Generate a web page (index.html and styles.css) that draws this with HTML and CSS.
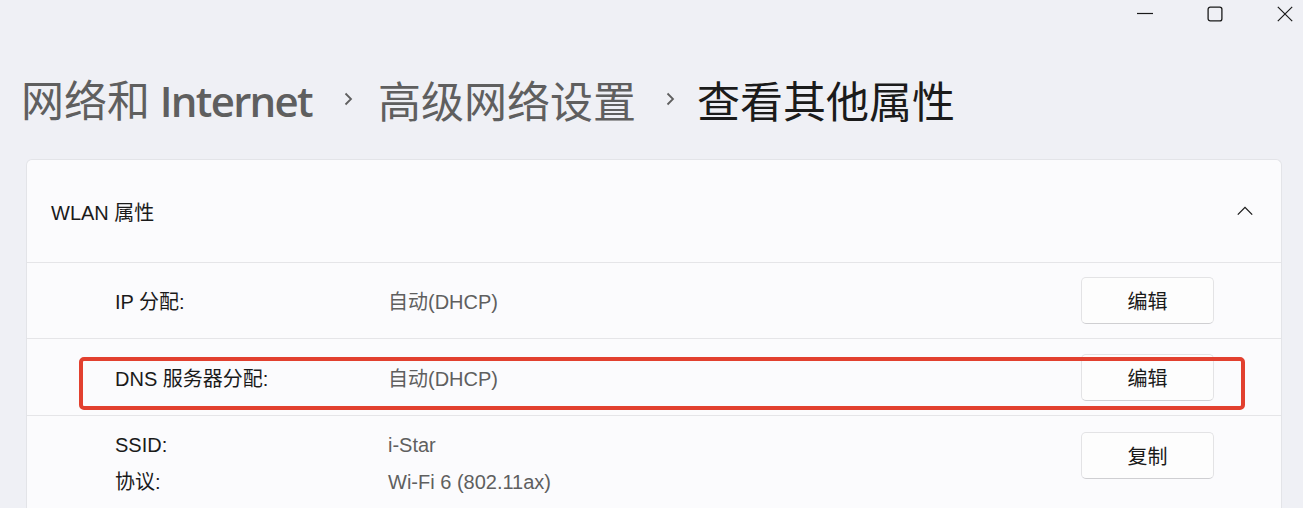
FILE: index.html
```html
<!DOCTYPE html>
<html lang="zh-CN">
<head>
<meta charset="utf-8">
<title>查看其他属性</title>
<link rel="stylesheet" href="styles.css">
</head>
<body>
<div class="titlebar">
  <svg class="cap-icon" width="16" height="16" viewBox="0 0 16 16"><path d="M0 7.5H16" stroke="#1a1a1a" stroke-width="1.2" fill="none"/></svg>
  <svg class="cap-icon" width="16" height="16" viewBox="0 0 16 16"><rect x="1.1" y="1.1" width="13.8" height="13.8" rx="2.2" stroke="#1a1a1a" stroke-width="1.3" fill="none"/></svg>
  <svg class="cap-icon" width="16" height="16" viewBox="0 0 16 16"><path d="M0.8 0.8L15.2 15.2M15.2 0.8L0.8 15.2" stroke="#1a1a1a" stroke-width="1.2" fill="none"/></svg>
</div>

<h1 class="breadcrumb">
  <span class="crumb">网络和 <span class="latin">Internet</span></span>
  <svg class="crumb-sep" width="9" height="14" viewBox="0 0 9 14"><path d="M1.5 1.5L7 7L1.5 12.5" stroke="#5f5f5f" stroke-width="1.8" fill="none"/></svg>
  <span class="crumb">高级网络设置</span>
  <svg class="crumb-sep narrow" width="9" height="14" viewBox="0 0 9 14"><path d="M1.5 1.5L7 7L1.5 12.5" stroke="#5f5f5f" stroke-width="1.8" fill="none"/></svg>
  <span class="crumb current">查看其他属性</span>
</h1>

<section class="card">
  <div class="card-head">
    <span class="card-title">WLAN 属性</span>
    <svg class="chevron-up" width="16" height="10" viewBox="0 0 16 10"><path d="M0.8 8.6L8 1.4L15.2 8.6" stroke="#1a1a1a" stroke-width="1.3" fill="none"/></svg>
  </div>

  <div class="row">
    <span class="label">IP 分配:</span>
    <span class="value">自动(DHCP)</span>
    <button class="btn">编辑</button>
  </div>

  <div class="row row-dns">
    <span class="label">DNS 服务器分配:</span>
    <span class="value">自动(DHCP)</span>
    <button class="btn">编辑</button>
    <div class="highlight"></div>
  </div>

  <div class="row row-multi">
    <div class="label lines"><span>SSID:</span><span>协议:</span></div>
    <div class="value lines"><span>i-Star</span><span>Wi-Fi 6 (802.11ax)</span></div>
    <button class="btn">复制</button>
  </div>
</section>
</body>
</html>
```

FILE: styles.css
```css
html, body {
  margin: 0;
  padding: 0;
}
body {
  background: #eff0f5;
  font-family: "Liberation Sans", "Noto Sans CJK SC", sans-serif;
  color: #1a1a1a;
  overflow: hidden;
  height: 508px;
}

.titlebar {
  height: 28px;
  display: flex;
  justify-content: flex-end;
  align-items: center;
  gap: 54px;
  padding-right: 10px;
}
.cap-icon {
  display: block;
}

.breadcrumb {
  margin: 43px 0 0 0;
  padding-left: 21px;
  height: 56px;
  display: flex;
  align-items: center;
  font-family: "Noto Sans CJK SC", sans-serif;
  font-size: 43px;
  line-height: 56px;
  font-weight: 400;
  color: #5f5f5f;
}
.crumb {
  white-space: nowrap;
}
.latin {
  font-family: "Open Sans", "Noto Sans CJK SC", sans-serif;
  font-weight: 600;
  font-size: 42px;
  letter-spacing: -1.7px;
}
.crumb.current {
  color: #1b1b1b;
}
.crumb-sep {
  display: block;
  margin: 0 25px 0 32px;
}
.crumb-sep.narrow {
  margin: 0 22px 0 30px;
}

.card {
  position: relative;
  box-sizing: border-box;
  margin: 32px 0 0 26px;
  width: 1256px;
  height: 349px;
  background: #fbfbfd;
  border: 1px solid #e3e4e8;
  border-bottom: none;
  border-radius: 6px 6px 0 0;
}
.card-head {
  height: 102px;
  display: flex;
  align-items: center;
  justify-content: space-between;
  padding: 0 28px 0 24px;
}
.card-title {
  font-size: 20px;
}
.chevron-up {
  display: block;
}

.row {
  position: relative;
  border-top: 1px solid #e5e5e8;
  height: 75px;
  display: flex;
  align-items: center;
  padding: 0 67px 0 88px;
  font-size: 20px;
}
.row-dns {
  height: 76px;
}
.label {
  width: 273px;
  color: #1a1a1a;
  flex: none;
}
.value {
  flex: 1;
  color: #5f5f5f;
}
.btn {
  flex: none;
  width: 133px;
  height: 47px;
  background: #fdfdfd;
  border: 1px solid #e3e3e5;
  border-bottom-color: #cfcfd2;
  border-radius: 5px;
  font-family: "Liberation Sans", "Noto Sans CJK SC", sans-serif;
  font-size: 20px;
  color: #1a1a1a;
  padding: 0;
}

.row-multi {
  align-items: flex-start;
  padding-top: 11px;
  height: auto;
}
.lines {
  display: flex;
  flex-direction: column;
  line-height: 37px;
}
.row-multi .btn {
  margin-top: 5px;
}

.highlight {
  position: absolute;
  left: 52px;
  top: 18px;
  width: 1158px;
  height: 45px;
  border: 4px solid #e2402f;
  border-radius: 5px;
  pointer-events: none;
}
```
